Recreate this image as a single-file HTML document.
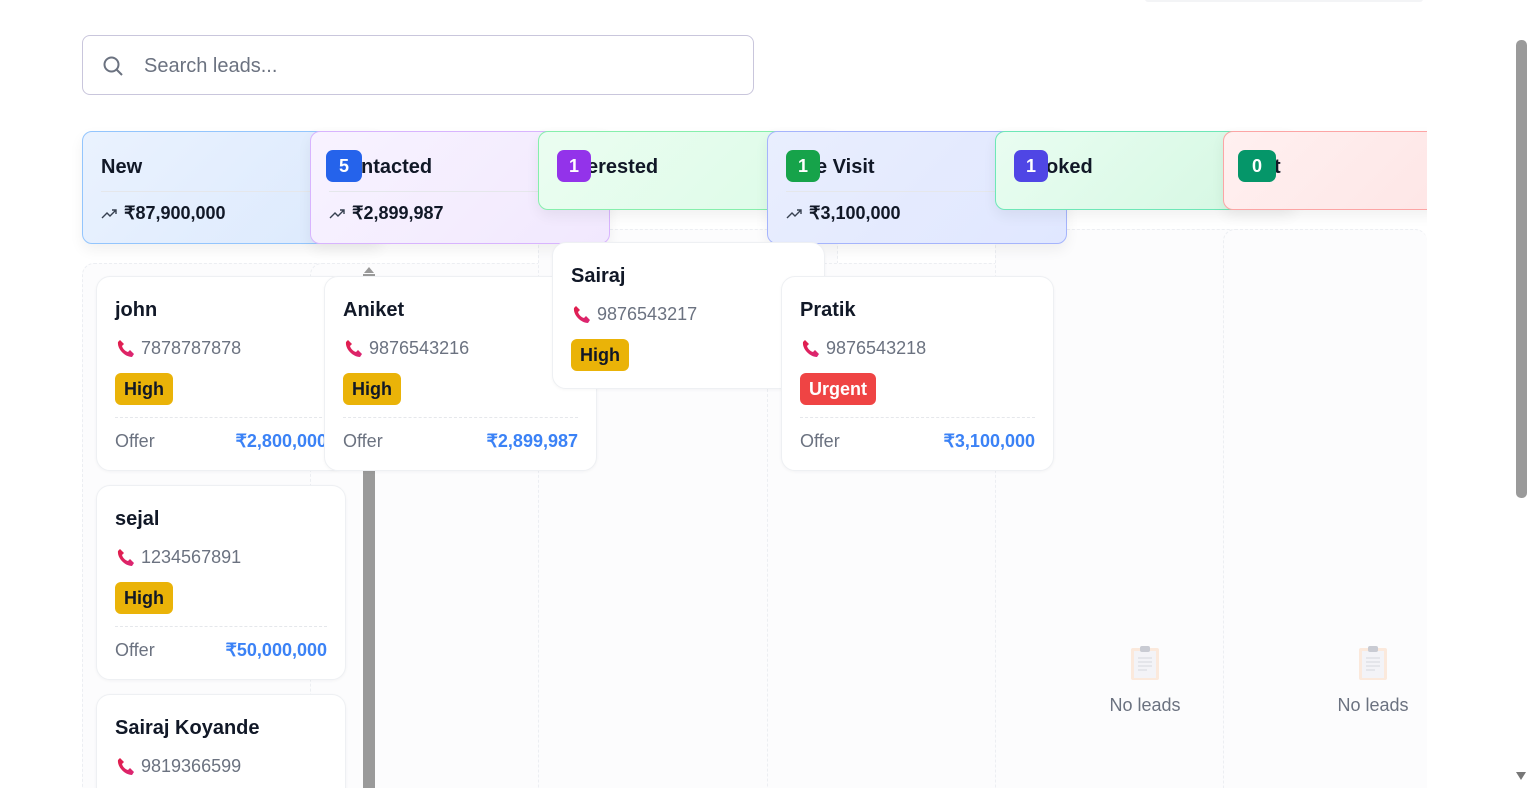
<!DOCTYPE html>
<html><head><meta charset="utf-8"><style>
*{box-sizing:border-box;margin:0;padding:0}
html,body{width:1527px;height:788px;overflow:hidden}
body{background:#fff;font-family:"Liberation Sans",sans-serif;position:relative;color:#111827}
.abs{position:absolute}
.search{left:82px;top:35px;width:672px;height:60px;border:1px solid #c9c6dc;border-radius:8px}
.search span{position:absolute;left:61px;top:19px;font-size:20px;color:#6b7280}
.hdr{position:absolute;border-radius:10px;border:1px solid;box-shadow:0 6px 14px rgba(0,0,0,.06)}
.hdr .t{position:absolute;left:18px;top:24px;font-size:20px;font-weight:bold}
.hdr .dv{position:absolute;left:18px;right:18px;top:59px;border-top:1px solid #e5e7eb}
.hdr .v{position:absolute;left:18px;top:71px;font-size:18px;font-weight:bold}
.hdr .v svg{vertical-align:-2px;margin-right:5px}
.badge{position:absolute;top:18px;height:32px;border-radius:7px;color:#fff;font-weight:bold;font-size:18px;text-align:center;line-height:32px}
.col{position:absolute;border:1px dashed #eceef2;border-radius:12px;background:#fcfcfd}
.card{position:absolute;background:#fff;border:1px solid #eef0f3;border-radius:14px;box-shadow:0 1px 3px rgba(0,0,0,.04)}
.card .n{position:absolute;left:18px;top:22px;font-size:20px;font-weight:bold}
.card .p{position:absolute;left:20px;top:61px;font-size:18px;color:#6b7280}
.card .p svg{vertical-align:-3px;margin-right:6px}
.card .b{position:absolute;left:18px;top:96px;height:32px;padding:0 9px;border-radius:6px;font-size:18px;font-weight:bold;line-height:32px}
.card .d{position:absolute;left:18px;right:18px;top:140px;border-top:1px dashed #e5e7eb}
.card .o{position:absolute;left:18px;top:154px;font-size:18px;color:#6b7280}
.card .ov{position:absolute;right:18px;top:154px;font-size:18px;font-weight:bold;color:#3b82f6}
.hi{background:#eab308;color:#111827}
.ur{background:#ef4444;color:#fff}
.nl{position:absolute;font-size:18px;color:#6b7280;text-align:center;width:120px}
</style></head><body>
<div class="abs" style="left:1145px;top:-4px;width:278px;height:6px;border-radius:4px;background:#f3f4f6"></div>
<div class="abs search">
<svg class="abs" style="left:18px;top:18px" width="24" height="24" viewBox="0 0 24 24" fill="none" stroke="#6b7280" stroke-width="2"><circle cx="10.5" cy="10.5" r="7"/><path d="M16 16l5 5"/></svg>
<span>Search leads...</span></div>

<div class="col" style="left:82px;top:263px;width:298px;height:540px"></div>
<div class="col" style="left:310px;top:263px;width:300px;height:540px"></div>
<div class="col" style="left:538px;top:229px;width:300px;height:570px"></div>
<div class="col" style="left:767px;top:263px;width:300px;height:540px"></div>
<div class="col" style="left:995px;top:229px;width:300px;height:570px"></div>
<div class="col" style="left:1223px;top:229px;width:204px;height:570px;border-right:none"></div>

<div class="hdr" style="left:82px;top:131px;width:300px;height:113px;background:linear-gradient(135deg,#eaf2fe,#dbe9fd);border-color:#93c5fd">
<div class="t">New</div><div class="dv"></div>
<div class="v"><svg width="18" height="14" viewBox="0 0 18 14" fill="none" stroke="#374151" stroke-width="1.4"><path d="M1 11l5-5 3 3 6-6M11 3h4v4"/></svg>₹87,900,000</div></div>
<div class="hdr" style="left:310px;top:131px;width:300px;height:113px;background:linear-gradient(135deg,#f8f3ff,#f1e8fe);border-color:#d8b4fe">
<div class="t" style="left:50px">ntacted</div><div class="dv"></div>
<div class="v"><svg width="18" height="14" viewBox="0 0 18 14" fill="none" stroke="#374151" stroke-width="1.4"><path d="M1 11l5-5 3 3 6-6M11 3h4v4"/></svg>₹2,899,987</div>
<div class="badge" style="left:15px;width:36px;background:#2563eb">5</div></div>
<div class="hdr" style="left:538px;top:131px;width:300px;height:79px;background:linear-gradient(135deg,#ebfdf1,#dcfce7);border-color:#86efac">
<div class="t" style="left:48px">erested</div>
<div class="badge" style="left:18px;width:34px;background:#9333ea">1</div></div>
<div class="hdr" style="left:767px;top:131px;width:300px;height:113px;background:linear-gradient(135deg,#e9eefe,#e0e7ff);border-color:#a5b4fc">
<div class="t" style="left:48px">e Visit</div><div class="dv"></div>
<div class="v"><svg width="18" height="14" viewBox="0 0 18 14" fill="none" stroke="#374151" stroke-width="1.4"><path d="M1 11l5-5 3 3 6-6M11 3h4v4"/></svg>₹3,100,000</div>
<div class="badge" style="left:18px;width:34px;background:#16a34a">1</div></div>
<div class="hdr" style="left:995px;top:131px;width:300px;height:79px;background:linear-gradient(135deg,#e9fdf1,#d3f7e1);border-color:#6ee7b7">
<div class="t" style="left:50px">oked</div>
<div class="badge" style="left:18px;width:34px;background:#4f46e5">1</div></div>
<div class="hdr" style="left:1223px;top:131px;width:220px;height:79px;background:linear-gradient(135deg,#fff0f0,#fee6e6);border-color:#fca5a5">
<div class="t" style="left:50px">t</div>
<div class="badge" style="left:14px;width:38px;background:#059669">0</div></div>
<div class="abs" style="left:1427px;top:0;width:100px;height:788px;background:#fff"></div>
<div class="abs" style="left:1516px;top:40px;width:11px;height:458px;background:#9a9a9a;border-radius:5px"></div>
<div class="abs" style="left:1516px;top:772px;width:0;height:0;border-left:5px solid transparent;border-right:5px solid transparent;border-top:8px solid #777"></div>

<svg width="0" height="0" style="position:absolute"><defs><linearGradient id="pg" x1="0" y1="0" x2="1" y2="1"><stop offset="0" stop-color="#e11d48"/><stop offset="1" stop-color="#db2777"/></linearGradient></defs></svg>
<div class="card" style="left:96px;top:276px;width:250px;height:195px">
<div class="n">john</div><div class="p"><svg width="18" height="18" viewBox="0 0 18 18"><path d="M3 1l4 4-2 2c1 3 3 5 6 6l2-2 4 4-2 3C8 18 0 10 1 3z" fill="url(#pg)"/></svg>7878787878</div>
<div class="b hi">High</div><div class="d"></div><div class="o">Offer</div><div class="ov">₹2,800,000</div></div>
<div class="card" style="left:96px;top:485px;width:250px;height:195px">
<div class="n">sejal</div><div class="p"><svg width="18" height="18" viewBox="0 0 18 18"><path d="M3 1l4 4-2 2c1 3 3 5 6 6l2-2 4 4-2 3C8 18 0 10 1 3z" fill="url(#pg)"/></svg>1234567891</div>
<div class="b hi">High</div><div class="d"></div><div class="o">Offer</div><div class="ov">₹50,000,000</div></div>
<div class="card" style="left:96px;top:694px;width:250px;height:120px">
<div class="n">Sairaj Koyande</div><div class="p"><svg width="18" height="18" viewBox="0 0 18 18"><path d="M3 1l4 4-2 2c1 3 3 5 6 6l2-2 4 4-2 3C8 18 0 10 1 3z" fill="url(#pg)"/></svg>9819366599</div></div>
<div class="abs" style="left:363px;top:274px;width:12px;height:514px;background:#9a9a9a"></div>
<div class="abs" style="left:364px;top:267px;border-left:5px solid transparent;border-right:5px solid transparent;border-bottom:6px solid #999"></div>
<div class="card" style="left:324px;top:276px;width:273px;height:195px">
<div class="n">Aniket</div><div class="p"><svg width="18" height="18" viewBox="0 0 18 18"><path d="M3 1l4 4-2 2c1 3 3 5 6 6l2-2 4 4-2 3C8 18 0 10 1 3z" fill="url(#pg)"/></svg>9876543216</div>
<div class="b hi">High</div><div class="d"></div><div class="o">Offer</div><div class="ov">₹2,899,987</div></div>
<div class="card" style="left:552px;top:242px;width:273px;height:147px">
<div class="n">Sairaj</div><div class="p"><svg width="18" height="18" viewBox="0 0 18 18"><path d="M3 1l4 4-2 2c1 3 3 5 6 6l2-2 4 4-2 3C8 18 0 10 1 3z" fill="url(#pg)"/></svg>9876543217</div>
<div class="b hi">High</div></div>
<div class="card" style="left:781px;top:276px;width:273px;height:195px">
<div class="n">Pratik</div><div class="p"><svg width="18" height="18" viewBox="0 0 18 18"><path d="M3 1l4 4-2 2c1 3 3 5 6 6l2-2 4 4-2 3C8 18 0 10 1 3z" fill="url(#pg)"/></svg>9876543218</div>
<div class="b ur">Urgent</div><div class="d"></div><div class="o">Offer</div><div class="ov">₹3,100,000</div></div>

<svg class="abs" style="left:1130px;top:645px" width="30" height="36" viewBox="0 0 30 36"><rect x="1" y="3" width="28" height="32" rx="2" fill="#fbe9dc"/><rect x="4" y="6" width="22" height="27" fill="#f3f3f7"/><rect x="10" y="1" width="10" height="6" rx="2" fill="#c9cbd3"/><path d="M8 13h14M8 17h14M8 21h14M8 25h9" stroke="#d5d7de"/></svg>
<div class="nl" style="left:1085px;top:695px">No leads</div>
<svg class="abs" style="left:1358px;top:645px" width="30" height="36" viewBox="0 0 30 36"><rect x="1" y="3" width="28" height="32" rx="2" fill="#fbe9dc"/><rect x="4" y="6" width="22" height="27" fill="#f3f3f7"/><rect x="10" y="1" width="10" height="6" rx="2" fill="#c9cbd3"/><path d="M8 13h14M8 17h14M8 21h14M8 25h9" stroke="#d5d7de"/></svg>
<div class="nl" style="left:1313px;top:695px">No leads</div>
</body></html>
